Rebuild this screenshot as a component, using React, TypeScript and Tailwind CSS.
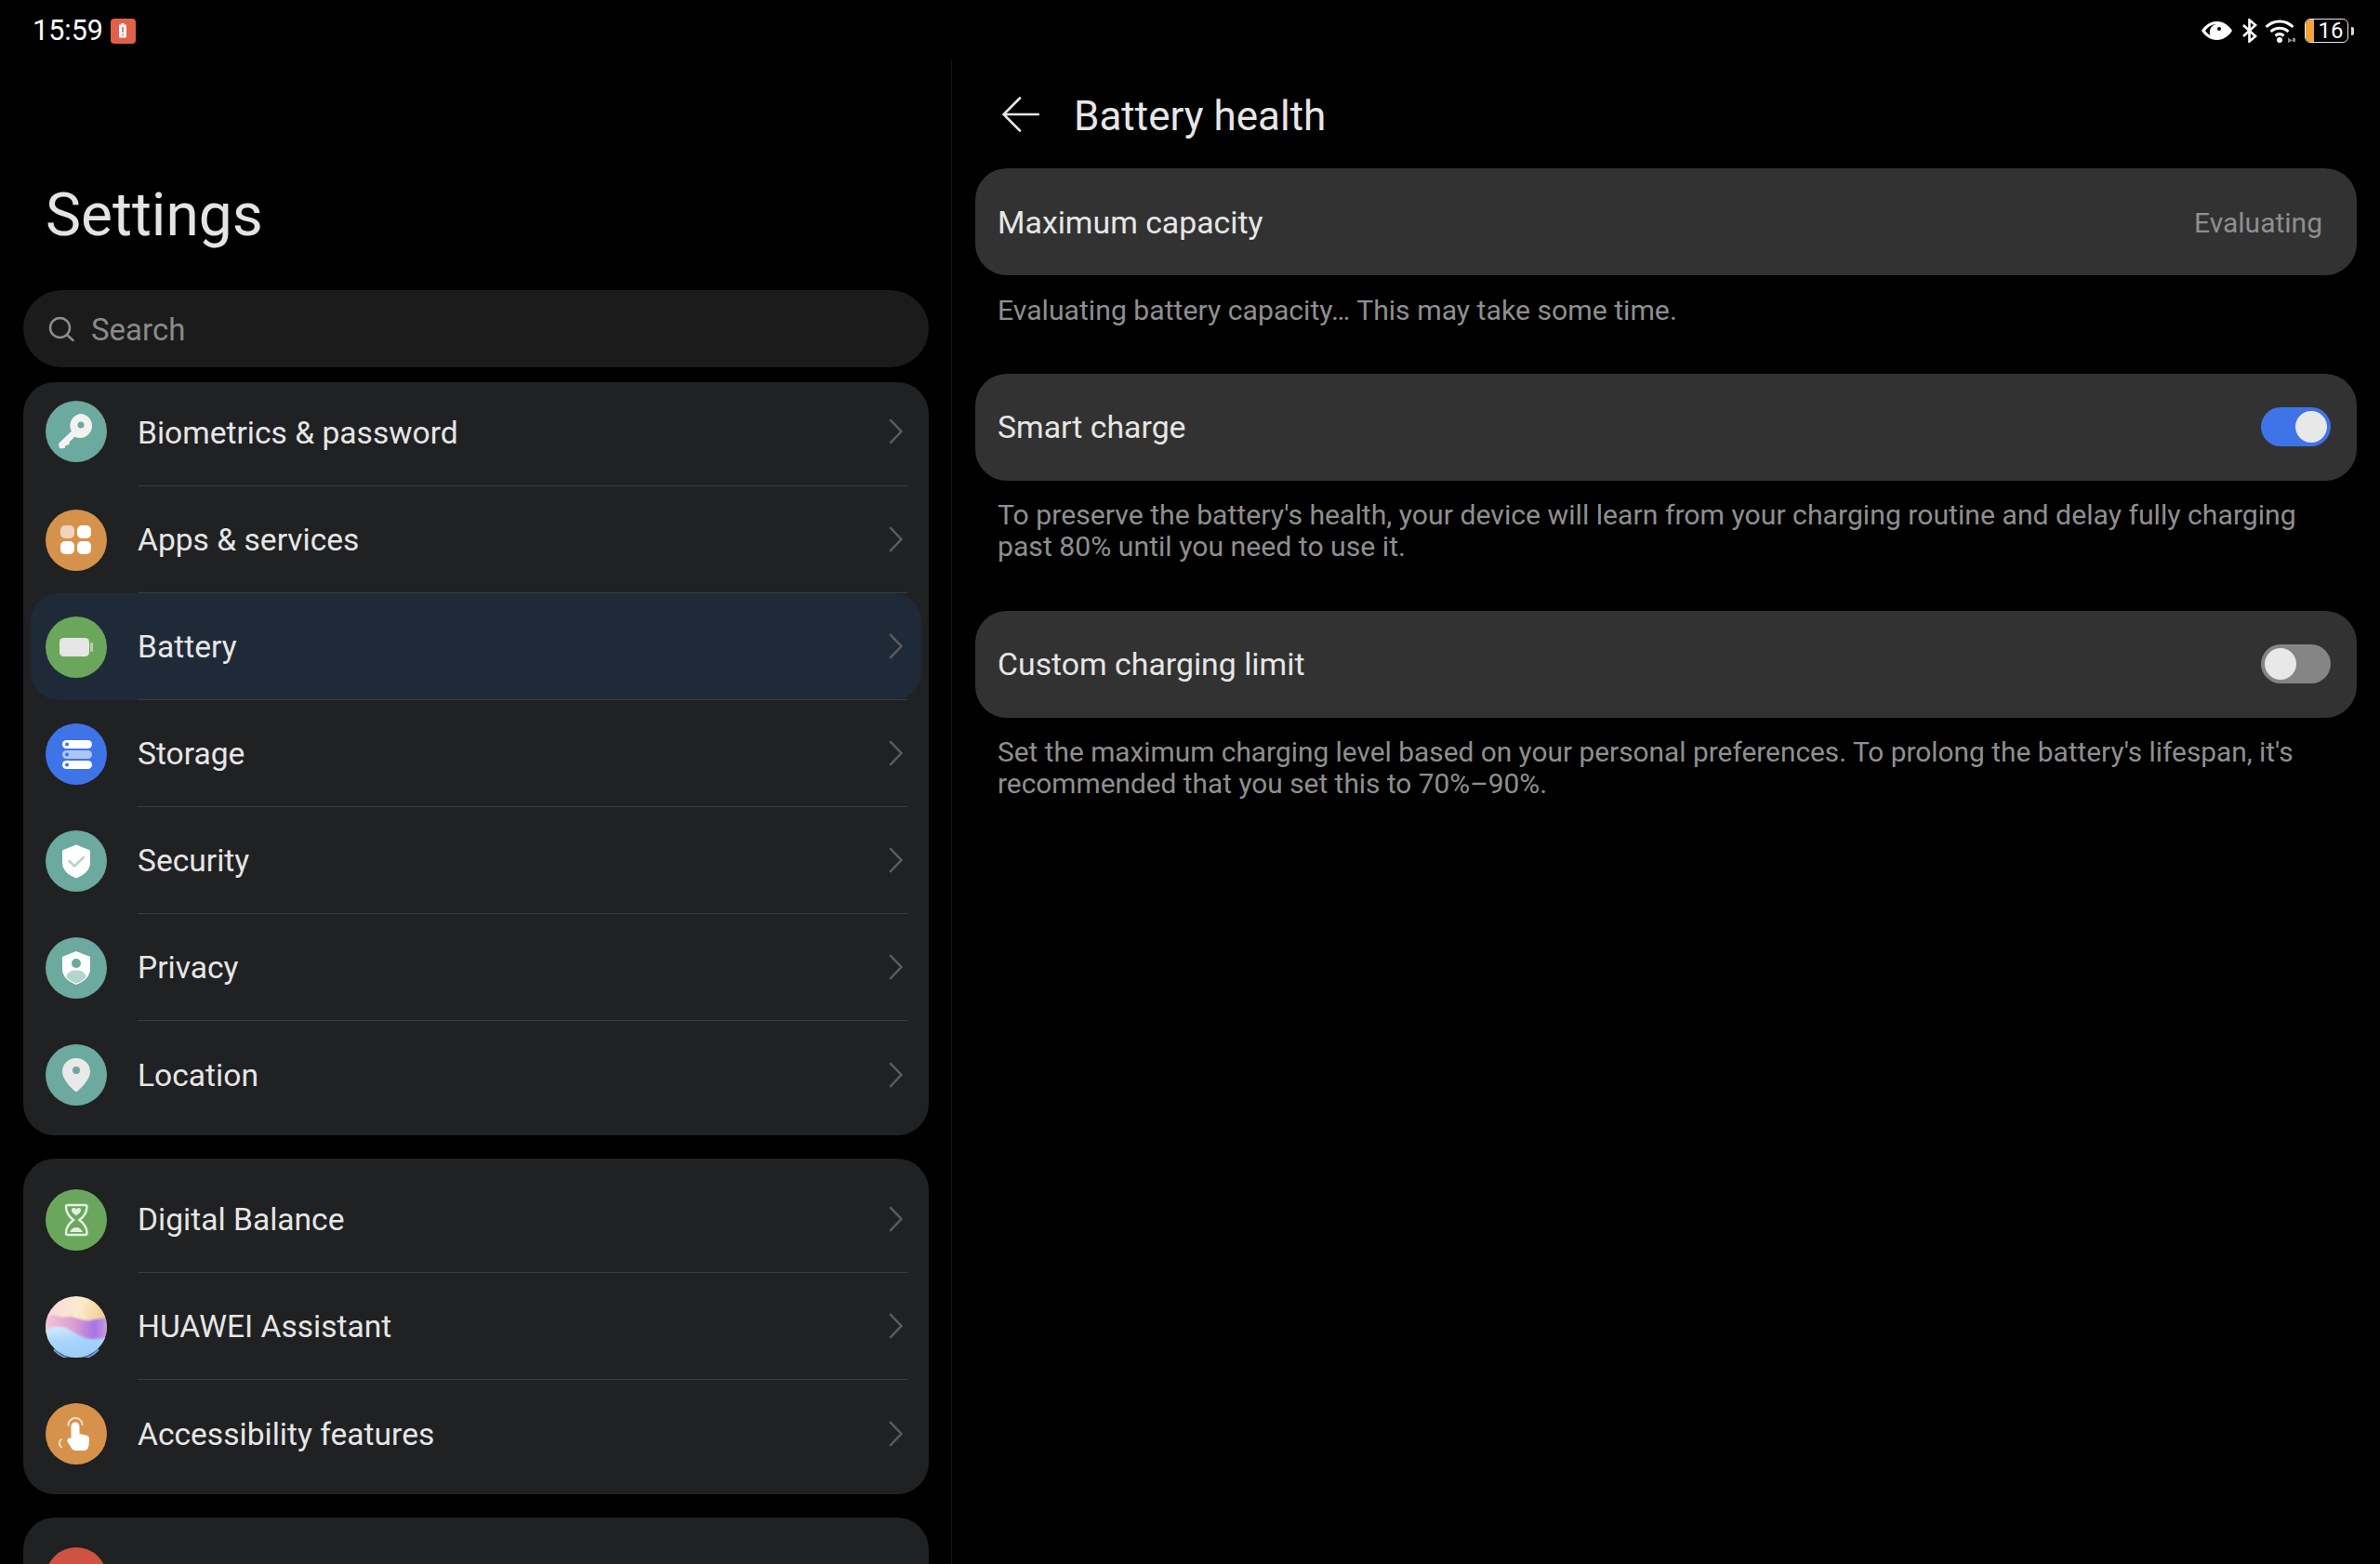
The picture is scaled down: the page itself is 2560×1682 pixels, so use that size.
import React from "react";

const TEAL = "#6ca99e";

const KeyIcon = () => (
  <svg viewBox="0 0 66 66" className="w-[66px] h-[66px]">
    <circle cx="33" cy="33" r="33" fill={TEAL} />
    <path d="M37 14a13 13 0 1 1-5.6 24.7L26 44l-1 3.500-3.500.5-.5 3-5 .5-1.500-1.500-.5-4 13.800-13.200A13 13 0 0 1 37 14z" fill="#f2f2f2" />
    <circle cx="38" cy="26" r="3.500" fill={TEAL} />
  </svg>
);

const AppsIcon = () => (
  <svg viewBox="0 0 66 66" className="w-[66px] h-[66px]">
    <circle cx="33" cy="33" r="33" fill="#d6924b" />
    <rect x="16" y="17" width="15" height="14" rx="5" fill="#f0d5bb" />
    <rect x="34" y="17" width="15" height="14" rx="5" fill="#ffffff" />
    <rect x="16" y="34" width="15" height="14" rx="5" fill="#ffffff" />
    <rect x="34" y="34" width="15" height="14" rx="5" fill="#ffffff" />
  </svg>
);

const BatteryIcon = () => (
  <svg viewBox="0 0 66 66" className="w-[66px] h-[66px]">
    <circle cx="33" cy="33" r="33" fill="#6aa75c" />
    <rect x="15" y="23" width="32" height="20" rx="4.500" fill="#e6e6e6" />
    <rect x="48" y="28" width="3" height="10" rx="1.200" fill="#b5d3ad" />
  </svg>
);

const StorageIcon = () => (
  <svg viewBox="0 0 66 66" className="w-[66px] h-[66px]">
    <circle cx="33" cy="33" r="33" fill="#3f74e8" />
    <rect x="18" y="18" width="32" height="9" rx="4.500" fill="#ffffff" />
    <rect x="18" y="29" width="32" height="9" rx="4.500" fill="#aec6f6" />
    <rect x="18" y="40" width="32" height="9" rx="4.500" fill="#ffffff" />
    <circle cx="23" cy="22.500" r="2" fill="#3f74e8" />
    <circle cx="23" cy="33.500" r="2" fill="#3f74e8" />
    <circle cx="23" cy="44.500" r="2" fill="#3f74e8" />
  </svg>
);

const SecurityIcon = () => (
  <svg viewBox="0 0 66 66" className="w-[66px] h-[66px]">
    <circle cx="33" cy="33" r="33" fill={TEAL} />
    <path d="M33 15.500l14 5.500a1.500 1.500 0 0 1 1 1.500v12c0 8-6 13.500-15 17-9-3.500-15-9-15-17v-12a1.500 1.500 0 0 1 1-1.500z" fill="#ffffff" />
    <path d="M25.500 33l5.500 5.500 10-9.500" fill="none" stroke="#b5d4ce" strokeWidth="2.500" strokeLinecap="round" strokeLinejoin="round" />
  </svg>
);

const PrivacyIcon = () => (
  <svg viewBox="0 0 66 66" className="w-[66px] h-[66px]">
    <circle cx="33" cy="33" r="33" fill={TEAL} />
    <path d="M33 15l14 5.500a1.500 1.500 0 0 1 1 1.500v12c0 8-6 13.500-15 17-9-3.500-15-9-15-17V22a1.500 1.500 0 0 1 1-1.500z" fill="#ffffff" />
    <circle cx="33" cy="28" r="5" fill={TEAL} />
    <path d="M22.500 43c0-5 4.500-7.500 10.500-7.500s10.500 2.500 10.500 7.500c-2.500 3-6.500 5.500-10.500 6.500-4-1-8-3.500-10.500-6.500z" fill="#b5d4ce" />
  </svg>
);

const LocationIcon = () => (
  <svg viewBox="0 0 66 66" className="w-[66px] h-[66px]">
    <circle cx="33" cy="33" r="33" fill={TEAL} />
    <path d="M33 15c8.500 0 15 6.300 15 14.500 0 7.500-7.500 15.500-13.500 21a2.200 2.200 0 0 1-3 0C25.500 45 18 37 18 29.500 18 21.300 24.500 15 33 15z" fill="#e9e9e9" />
    <circle cx="33" cy="28" r="4" fill={TEAL} />
  </svg>
);

const HourglassIcon = () => (
  <svg viewBox="0 0 66 66" className="w-[66px] h-[66px]">
    <circle cx="33" cy="33" r="33" fill="#6aa75c" />
    <path d="M24 17h18.500a2 2 0 0 1 2 2c0 6-3.500 10.500-8 14 4.500 3.500 8 8 8 14a2 2 0 0 1-2 2H24a2 2 0 0 1-2-2c0-6 3.500-10.500 8-14-4.500-3.500-8-8-8-14a2 2 0 0 1 2-2z" fill="none" stroke="#e3efe0" strokeWidth="2.500" />
    <path d="M33 28.500c-2-2-5-3.500-5-5.500a2.500 2.500 0 0 1 5-.8 2.500 2.500 0 0 1 5 .8c0 2-3 3.500-5 5.500z" fill="#e3efe0" />
    <path d="M26 46c1-3 4-5 7-5s6 2 7 5z" fill="#e3efe0" />
  </svg>
);

const AssistantIcon = () => (
  <svg viewBox="0 0 66 66" className="w-[66px] h-[66px]">
    <defs>
      <clipPath id="assistant-clip">
        <circle cx="33" cy="33" r="33" />
      </clipPath>
      <filter id="assistant-soft" x="-20%" y="-20%" width="140%" height="140%">
        <feGaussianBlur stdDeviation="1.200" />
      </filter>
      <linearGradient id="assistant-top" x1="0" y1="0" x2="1" y2="0.300">
        <stop offset="0" stopColor="#f6d3e0" />
        <stop offset="0.550" stopColor="#fbeccf" />
        <stop offset="1" stopColor="#f2c98a" />
      </linearGradient>
      <linearGradient id="assistant-mid" x1="0" y1="0" x2="1" y2="0">
        <stop offset="0" stopColor="#f3c4d6" />
        <stop offset="0.450" stopColor="#dba0cf" />
        <stop offset="0.800" stopColor="#a873e6" />
        <stop offset="1" stopColor="#c79ae0" />
      </linearGradient>
      <linearGradient id="assistant-low" x1="0" y1="0" x2="0.300" y2="1">
        <stop offset="0" stopColor="#d8ecfb" />
        <stop offset="0.500" stopColor="#a8d6fb" />
        <stop offset="1" stopColor="#9ccdf9" />
      </linearGradient>
    </defs>
    <g clipPath="url(#assistant-clip)">
      <rect width="66" height="66" fill="url(#assistant-top)" />
      <path d="M0 24c6-5 10-4 15-2 5 2 8-1 13 0 8 2 12 5 20 4 7-1 12-3 18-2v28H0z" fill="url(#assistant-mid)" filter="url(#assistant-soft)" />
      <path d="M0 36c9-4 17-4 24-1 9 5 16 11 26 11 6 0 11-1 16-2v22H0z" fill="url(#assistant-low)" filter="url(#assistant-soft)" />
    </g>
    <path d="M9 57.500A33 33 0 0 0 57 57.500" fill="none" stroke="#6d9fe8" strokeWidth="2" />
  </svg>
);

const HandIcon = () => (
  <svg viewBox="0 0 66 66" className="w-[66px] h-[66px]">
    <circle cx="33" cy="33" r="33" fill="#d6924b" />
    <path d="M24.500 24a7.500 7.500 0 0 1 15-1" fill="none" stroke="#f3dcc3" strokeWidth="2" strokeLinecap="round" />
    <path d="M17 39c-3 2-3 6 0 8.500" fill="none" stroke="#f3dcc3" strokeWidth="2" strokeLinecap="round" />
    <path d="M27.500 25a4.500 4.500 0 0 1 9 0V33l7 1.500c2.500.6 3.500 2 3.500 4.500l-.6 7c-.3 3-2.400 5-5.400 5h-8c-2.500 0-4-.9-5.200-2.800l-4-6.500c-1.700-2.800 2-5.400 4-3.400l-.3.200z" fill="#ffffff" />
  </svg>
);

const Chevron = () => (
  <svg viewBox="0 0 15 28" className="w-[15px] h-[28px]" fill="none" stroke="#5c5c5c" strokeWidth="2.400">
    <path d="M1.200 1.200L13.500 14 1.200 26.800" />
  </svg>
);

interface RowProps {
  icon: React.ReactNode;
  label: string;
  first?: boolean;
  last?: boolean;
  active?: boolean;
}

const Row: React.FC<RowProps> = ({ icon, label, first, last, active }) => (
  <div
    className={`mx-[8px] pl-[16px] pr-[15px] flex items-stretch ${first ? "h-[112px]" : "h-[115px]"} ${active ? "bg-[#1f2a38] rounded-[30px]" : ""}`}
  >
    <div className={`flex items-center shrink-0 w-[99px] ${first ? "pb-[6px]" : ""}`}>{icon}</div>
    <div
      className={`flex-1 flex items-center justify-between pr-[5px] ${last ? "" : "border-b-[1.5px] border-[#3b3c3d]"} ${first ? "pb-[6px]" : ""}`}
    >
      <span className={`text-[33.6px] text-[#e6e6e6] ${first ? "pt-[6px]" : "pt-[3px]"}`}>{label}</span>
      <Chevron />
    </div>
  </div>
);

const Toggle: React.FC<{ on?: boolean }> = ({ on }) => (
  <div
    className={`w-[75px] h-[42px] rounded-full flex items-center px-[4px] ${on ? "bg-[#3f74e8] justify-end" : "bg-[#858585] justify-start"}`}
  >
    <div className="w-[34px] h-[34px] rounded-full bg-[#e8e8e8]" />
  </div>
);

const SettingCard: React.FC<{ label: string; children: React.ReactNode }> = ({ label, children }) => (
  <div className="h-[115px] rounded-[34px] bg-[#323232] pl-[24px] pr-[28px] flex items-center justify-between">
    <span className="text-[33.8px] text-[#e6e6e6] pt-[3px]">{label}</span>
    {children}
  </div>
);

export default function App() {
  return (
    <div className="w-[2560px] h-[1682px] overflow-hidden bg-black font-['Roboto',sans-serif] flex flex-col">
      {/* status bar */}
      <div className="h-[65px] shrink-0 flex items-center justify-between pl-[35px] pr-[28px] pt-[1px]">
        <div className="flex items-center gap-[8px]">
          <span className="text-[30.5px] text-white">15:59</span>
          <div className="w-[27px] h-[27px] rounded-[4px] bg-[#e0604a] flex items-center justify-center">
            <svg viewBox="0 0 10 16" className="w-[10px] h-[16px]">
              <rect x="3.500" y="0" width="3" height="2" fill="#fff" />
              <rect x="1" y="1.500" width="8" height="14" rx="1" fill="#fff" />
              <rect x="4.200" y="4" width="1.600" height="6" fill="#e0604a" />
              <rect x="4.200" y="11.500" width="1.600" height="1.800" fill="#e0604a" />
            </svg>
          </div>
        </div>
        <div className="flex items-center">
          <svg viewBox="0 0 33 22" className="w-[33px] h-[22px]">
            <path d="M16.500 1C24 1 29.500 5.500 33 11c-3.500 5.500-9 10-16.500 10S3.500 16.500 0 11C3.500 5.500 9 1 16.500 1z" fill="#fff" />
            <path d="M16.500 4C11 4 7 7 4 11c1.500 2 3.300 3.700 5.500 4.900A8.500 8.500 0 0 1 16.500 4z" fill="#000" />
            <circle cx="19" cy="9" r="2" fill="#000" />
          </svg>
          <svg viewBox="0 0 17 26" className="w-[17px] h-[26px] ml-[10px]" fill="none" stroke="#fff" strokeWidth="2.600">
            <path d="M2 7l13 12-6.500 5.500v-23L15 7 2 19" />
          </svg>
          <svg viewBox="0 0 34 26" className="w-[34px] h-[26px] ml-[8px]">
            <path d="M1.500 9C10 1 22 1 30.500 9M6.500 14c5.500-5 13.500-5 19 0" fill="none" stroke="#fff" strokeWidth="3" />
            <path d="M11.500 18.500c3-2.500 6-2.500 9 0" fill="none" stroke="#fff" strokeWidth="3" />
            <circle cx="16" cy="23" r="3" fill="#fff" />
            <path d="M25 20.500l5 3-5 2.500z M30 21h3v4h-3z" fill="#8a8a8a" />
          </svg>
          <div className="w-[47px] h-[26px] ml-[9px] rounded-[6px] border-[1.500px] border-[#e8e8e8] flex items-stretch overflow-hidden">
            <div className="w-[9px] bg-[#f0a43a]" />
            <span className="flex-1 flex items-center justify-center text-[24px] leading-none text-white">16</span>
          </div>
          <div className="w-[3px] h-[9px] ml-[3px] rounded-r-[2px] bg-[#d8d8d8]" />
        </div>
      </div>

      <div className="flex-1 flex items-stretch">
        {/* settings list */}
        <div className="w-[1023px] shrink-0 pl-[25px] pr-[24px]">
          <h1 className="pt-[131px] pb-[44px] pl-[24px] text-[64px] leading-[72px] text-[#e4e4e4] font-normal">Settings</h1>
          <div className="h-[83px] rounded-full bg-[#1b1b1b] flex items-center pl-[27px] gap-[18px]">
            <svg viewBox="0 0 28 28" className="w-[28px] h-[28px]" fill="none" stroke="#8c8c8c" strokeWidth="2.500">
              <circle cx="12.500" cy="12.500" r="10.500" />
              <path d="M21 21l5.500 5" strokeLinecap="round" />
            </svg>
            <span className="text-[33px] text-[#8a8a8a] pt-[2px]">Search</span>
          </div>

          <div className="mt-[16px] rounded-[34px] bg-[#202122] pb-[8px]">
            <Row first icon={<KeyIcon />} label="Biometrics & password" />
            <Row icon={<AppsIcon />} label="Apps & services" />
            <Row active icon={<BatteryIcon />} label="Battery" />
            <Row icon={<StorageIcon />} label="Storage" />
            <Row icon={<SecurityIcon />} label="Security" />
            <Row icon={<PrivacyIcon />} label="Privacy" />
            <Row last icon={<LocationIcon />} label="Location" />
          </div>

          <div className="mt-[25px] rounded-[34px] bg-[#202122] py-[8px]">
            <Row icon={<HourglassIcon />} label="Digital Balance" />
            <Row icon={<AssistantIcon />} label="HUAWEI Assistant" />
            <Row last icon={<HandIcon />} label="Accessibility features" />
          </div>

          <div className="mt-[25px] h-[200px] rounded-[34px] bg-[#202122] pt-[32px] pl-[24px]">
            <div className="w-[66px] h-[66px] rounded-full bg-[#cf5340]" />
          </div>
        </div>

        {/* battery health */}
        <div className="flex-1 border-l-[1.500px] border-[#161616] pl-[25px] pr-[25px]">
          <div className="h-[116px] flex items-center pl-[29px] gap-[37px]">
            <svg viewBox="0 0 40 38" className="w-[40px] h-[38px]" fill="none" stroke="#e6e6e6" strokeWidth="2.600" strokeLinecap="round">
              <path d="M39 19H2M19 1.500L1.500 19 19 36.500" />
            </svg>
            <h2 className="text-[44px] text-[#e6e6e6] font-normal pt-[4px]">Battery health</h2>
          </div>

          <SettingCard label="Maximum capacity">
            <span className="text-[30px] text-[#8f8f8f] pr-[9px] pt-[1px]">Evaluating</span>
          </SettingCard>
          <p className="pt-[21px] pb-[50px] pl-[24px] text-[30.2px] leading-[34.500px] text-[#8f8f8f]">
            Evaluating battery capacity… This may take some time.
          </p>

          <SettingCard label="Smart charge">
            <Toggle on />
          </SettingCard>
          <p className="pt-[20px] pb-[51px] pl-[24px] text-[30.2px] leading-[34.500px] text-[#8f8f8f]">
            To preserve the battery's health, your device will learn from your charging routine and delay fully charging
            <br />
            past 80% until you need to use it.
          </p>

          <SettingCard label="Custom charging limit">
            <Toggle />
          </SettingCard>
          <p className="pt-[20px] pl-[24px] text-[29.85px] leading-[34.500px] text-[#8f8f8f]">
            Set the maximum charging level based on your personal preferences. To prolong the battery's lifespan, it's
            <br />
            recommended that you set this to 70%–90%.
          </p>
        </div>
      </div>
    </div>
  );
}
